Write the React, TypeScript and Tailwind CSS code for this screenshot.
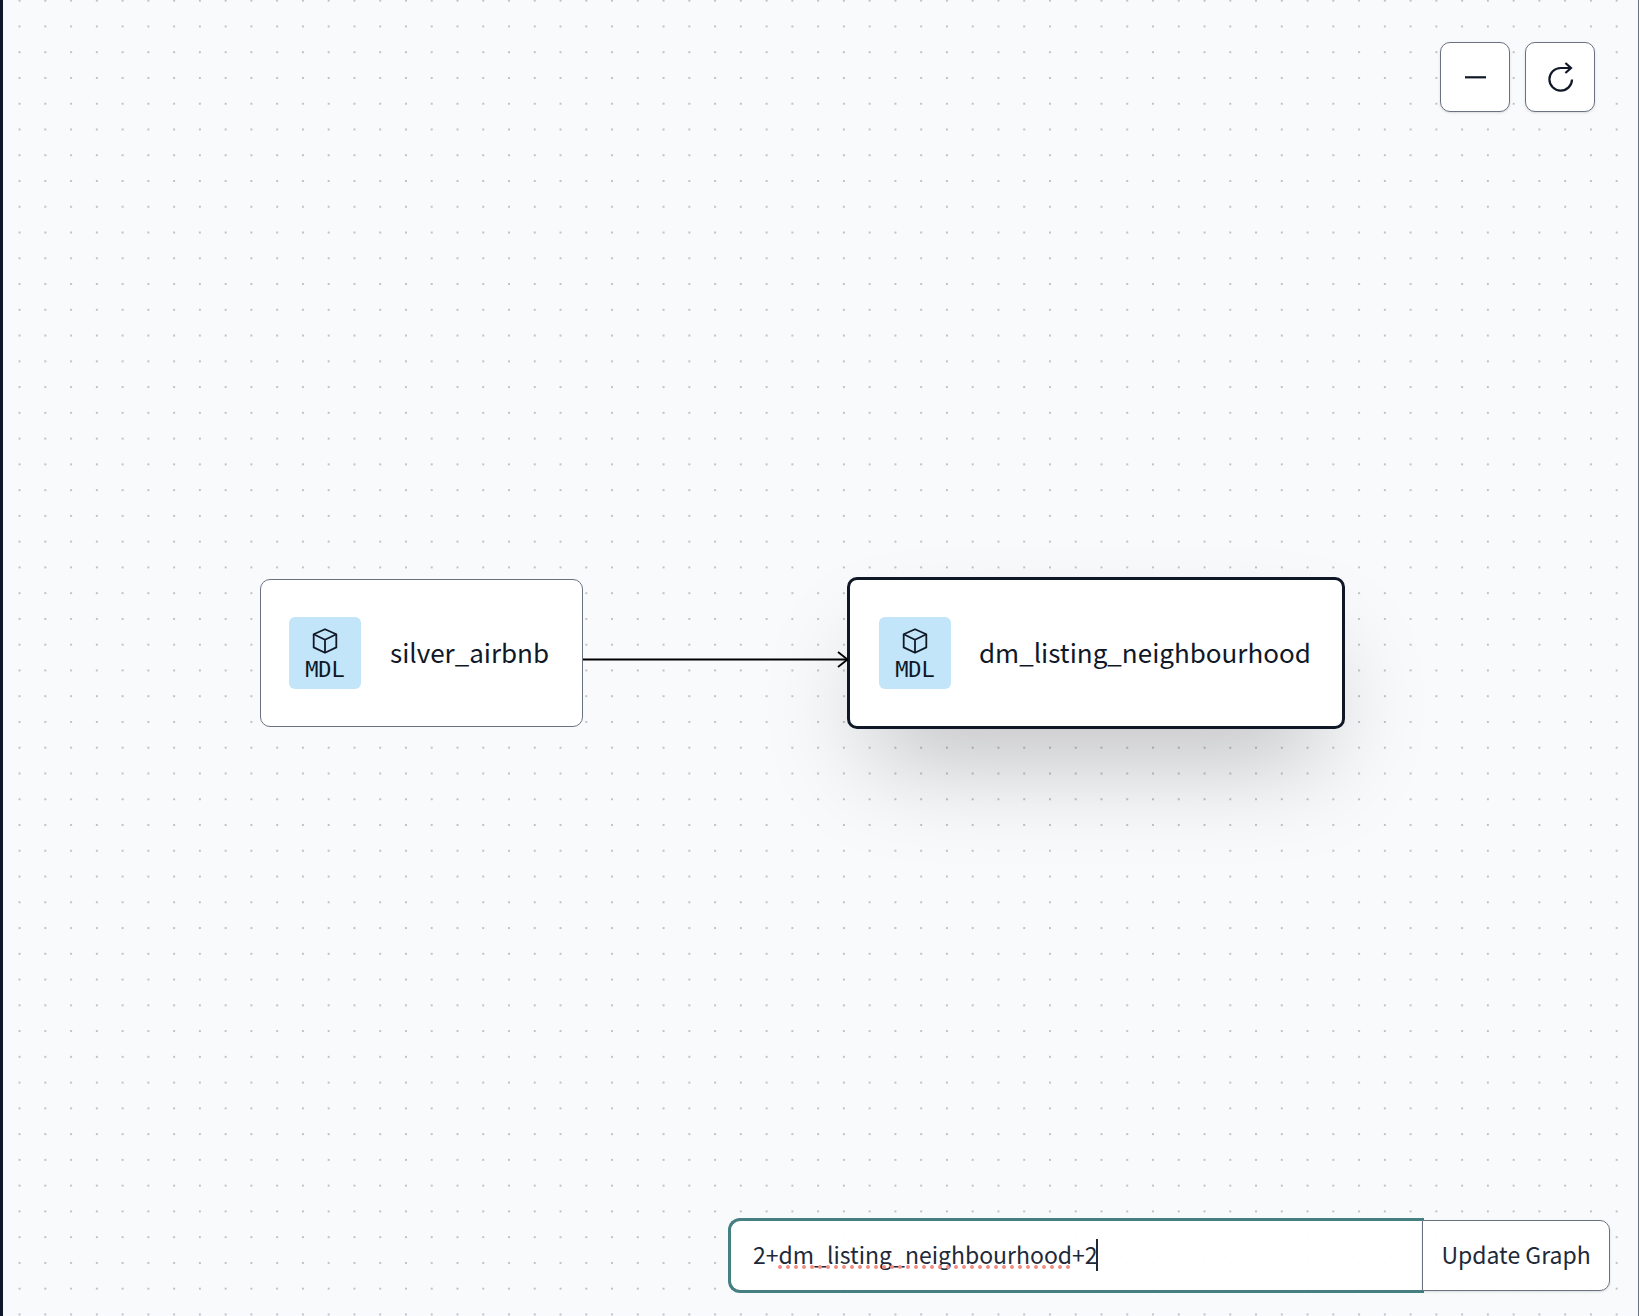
import { useState } from 'react';

function CubeIcon() {
  return (
    <svg width="26" height="26" viewBox="0 0 26 26" fill="none" stroke="#111827" strokeWidth="1.8" strokeLinejoin="round" aria-hidden="true">
      <path d="M13 1.2 24.3 6.2v13.2L13 24.8 1.7 19.4V6.2Z" />
      <path d="M1.7 6.2 13 11.8 24.3 6.2M13 11.8v13" />
    </svg>
  );
}

function ModelBadge() {
  return (
    <div className="flex size-[72px] shrink-0 flex-col items-center rounded-md bg-[#c2e5f9] pt-[11px]">
      <CubeIcon />
      <span className="font-['DejaVu_Sans_Mono',monospace] text-[22px] leading-8 text-gray-900">MDL</span>
    </div>
  );
}

function ModelNode({ name, className }: { name: string; className: string }) {
  return (
    <div className={`absolute flex items-center bg-white ${className}`}>
      <ModelBadge />
      <span className="pb-0.5 text-[26px] leading-9 whitespace-nowrap text-gray-900">{name}</span>
    </div>
  );
}

const toolButton =
  'flex size-[70px] items-center justify-center rounded-[10px] border border-gray-500 bg-white text-gray-900 shadow-sm';

export default function App() {
  const [selector, setSelector] = useState('2+dm_listing_neighbourhood+2');

  return (
    <main className="relative flex min-h-screen w-full flex-col justify-between overflow-hidden border-r border-l-3 border-r-gray-500 border-l-slate-900 bg-[#f9fafc] font-['Noto_Sans_CJK_SC',sans-serif]">
      <svg className="absolute inset-0 size-full" aria-hidden="true">
        <defs>
          <pattern id="dots" x="3.7" y="-12.2" width="25.76" height="25.76" patternUnits="userSpaceOnUse">
            <circle cx="12.88" cy="12.88" r="1.03" fill="#b2b2b9" />
          </pattern>
        </defs>
        <rect width="100%" height="100%" fill="url(#dots)" />
      </svg>

      <ModelNode
        name="silver_airbnb"
        className="top-[579px] left-[257px] h-[148px] w-[323px] gap-[29px] rounded-[10px] border border-gray-500 pl-7"
      />
      <ModelNode
        name="dm_listing_neighbourhood"
        className="top-[577px] left-[844px] h-[152px] w-[498px] gap-7 rounded-[10px] border-3 border-gray-900 pl-[29px] shadow-[0_52px_103px_-25px_rgba(0,0,0,0.25)]"
      />
      <svg className="absolute top-[649px] left-[580px]" width="266" height="20" viewBox="0 0 266 20" fill="none" stroke="#000" strokeWidth="1.8" aria-hidden="true">
        <path d="M0 10.5H264" />
        <path d="M255 3l9.5 7.5L255 18" />
      </svg>

      <div className="relative flex justify-end gap-[15px] pt-[42px] pr-[43px]">
        <button type="button" aria-label="Collapse" className={toolButton}>
          <svg width="24" height="24" viewBox="0 0 24 24" fill="none" stroke="currentColor" strokeWidth="2.2" aria-hidden="true">
            <path d="M2 12.3h21" />
          </svg>
        </button>
        <button type="button" aria-label="Refresh" className={toolButton}>
          <svg width="30" height="30" viewBox="0 0 30 30" fill="none" stroke="currentColor" strokeWidth="2.2" aria-hidden="true">
            <path d="M27 17.4A11.3 11.3 0 1 1 15.7 6H26M20.4 1l5.6 5-5.6 5" />
          </svg>
        </button>
      </div>

      <form
        className="relative flex items-center justify-end pr-7 pb-[23px] pl-6 text-[23px] text-gray-800"
        onSubmit={(event) => event.preventDefault()}
      >
        <div className="relative w-full max-w-[696px]">
          <input
            type="text"
            aria-label="Graph selector"
            spellCheck={false}
            value={selector}
            onChange={(event) => setSelector(event.target.value)}
            className="block h-[75px] w-full rounded-l-xl border-3 border-r-0 border-[#457f82] bg-white/95 pb-[3px] pl-[22px] caret-transparent outline-none"
          />
          <svg className="absolute top-[47px] left-[50px]" width="292" height="4" viewBox="0 0 292 4" aria-hidden="true">
            <path d="M2 2H291" stroke="#f28b82" strokeWidth="4" strokeLinecap="round" strokeDasharray="0 8" />
          </svg>
          <span className="absolute top-[21px] left-[368px] h-8 w-0.5 bg-gray-800" />
        </div>
        <button type="submit" className="relative -ml-0.5 h-[71px] w-[188px] shrink-0 rounded-r-[10px] border border-gray-500 bg-white/95 pb-0.5 whitespace-nowrap shadow-sm">
          Update Graph
        </button>
      </form>
    </main>
  );
}
